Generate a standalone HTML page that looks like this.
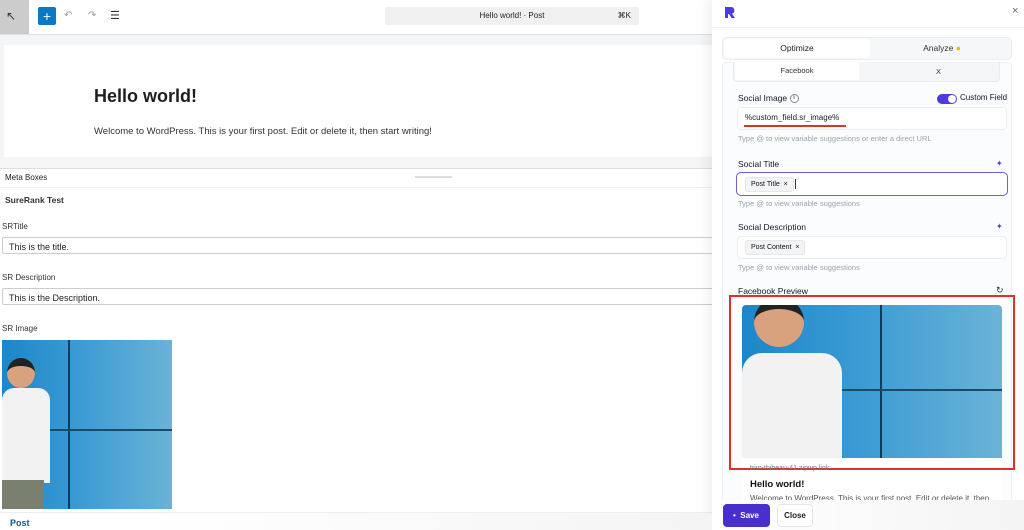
<!DOCTYPE html>
<html><head><style>
*{box-sizing:border-box;margin:0;padding:0}
body{width:1024px;height:530px;overflow:hidden;font-family:"Liberation Sans",sans-serif;background:#fff;position:relative;color:#1e1e1e}
.a{position:absolute}
.t{font-size:9px;color:#1e1e1e}
.inp{position:absolute;border:1px solid #ccc;border-radius:2px;background:#fff;font-size:9px;padding:4px 6px}
.img{background:linear-gradient(90deg,#1d86c8 0%,#3a9bd4 45%,#6ab3d6 100%);overflow:hidden}
.chip{display:inline-block;background:#f3f4f6;border:1px solid #e5e7eb;border-radius:3px;font-size:7px;padding:3px 5px;color:#111}
.lbl{font-size:8.5px;color:#111827;font-weight:500}
.hint{font-size:7.5px;color:#9ca3af}
</style></head><body>
<div class="a" style="left:0;top:0;width:29px;height:34px;background:#ccc;font-size:12px;padding:9px 6px;color:#333">↖</div>
<div class="a" style="left:38px;top:7px;width:18px;height:18px;background:#0a78c2;border-radius:2px;color:#fff;font-size:14px;text-align:center;line-height:18px">+</div>
<div class="a" style="left:64px;top:10px;font-size:10px;color:#999">↶</div>
<div class="a" style="left:88px;top:10px;font-size:10px;color:#999">↷</div>
<div class="a" style="left:110px;top:9px;font-size:11px;color:#333">☰</div>
<div class="a" style="left:385px;top:7px;width:254px;height:18px;background:#f0f0f0;border-radius:2px;font-size:8px;line-height:18px;text-align:center">Hello world! · Post<span style="position:absolute;right:8px">⌘K</span></div>
<div class="a" style="left:0;top:34px;width:712px;height:1px;background:#e0e0e0"></div>
<div class="a" style="left:0;top:35px;width:712px;height:133px;background:#f3f5f6"></div>
<div class="a" style="left:4px;top:45px;width:712px;height:112px;background:#fff"></div>
<div class="a" style="left:94px;top:86px;font-size:18px;font-weight:bold">Hello world!</div>
<div class="a" style="left:94px;top:126px;font-size:9.5px;color:#333">Welcome to WordPress. This is your first post. Edit or delete it, then start writing!</div>
<div class="a" style="left:0;top:168px;width:712px;height:1px;background:#ddd"></div>
<div class="a t" style="left:5px;top:173px;font-size:8px">Meta Boxes</div>
<div class="a" style="left:415px;top:176px;width:37px;height:2px;background:#ddd"></div>
<div class="a" style="left:0;top:187px;width:712px;height:1px;background:#eee"></div>
<div class="a t" style="left:5px;top:195px;font-size:8.5px;font-weight:bold;color:#333">SureRank Test</div>
<div class="a t" style="left:2px;top:222px;font-size:8px;color:#333">SRTitle</div>
<div class="inp" style="left:2px;top:237px;width:720px;height:17px">This is the title.</div>
<div class="a t" style="left:2px;top:273px;font-size:8px;color:#333">SR Description</div>
<div class="inp" style="left:2px;top:288px;width:720px;height:17px">This is the Description.</div>
<div class="a t" style="left:2px;top:324px;font-size:8px;color:#333">SR Image</div>
<div class="a img" style="left:2px;top:340px;width:170px;height:169px">
 <div class="a" style="left:66px;top:0;width:2px;height:169px;background:#0f3a5a"></div>
 <div class="a" style="left:0;top:89px;width:170px;height:2px;background:#1a4a6a"></div>
 <div class="a" style="left:5px;top:18px;width:28px;height:30px;border-radius:50%;background:#d9a27e;border-top:8px solid #222"></div>
 <div class="a" style="left:0;top:48px;width:48px;height:95px;background:#f2f2f2;border-radius:12px 12px 0 0"></div>
 <div class="a" style="left:0;top:140px;width:42px;height:29px;background:#7a8070"></div>
</div>
<div class="a" style="left:0;top:512px;width:712px;height:1px;background:#eee"></div>
<div class="a" style="left:712px;top:0;width:312px;height:530px;background:#fff;box-shadow:-6px 0 10px rgba(0,0,0,.06)"></div>
<svg class="a" style="left:724px;top:6px" width="12" height="13" viewBox="0 0 12 13"><path d="M1 1h6a3.5 3.5 0 0 1 1 6.8L11 12H7.5L5 8H4v4H1z" fill="#4b3ce0"/></svg>
<div class="a" style="left:1012px;top:5px;font-size:11px;color:#666">×</div>
<div class="a" style="left:712px;top:27px;width:312px;height:1px;background:#eee"></div>
<div class="a" style="left:722px;top:37px;width:290px;height:23px;background:#f5f7f9;border:1px solid #e9edf1;border-radius:5px"></div>
<div class="a" style="left:724px;top:39px;width:146px;height:19px;background:#fff;border-radius:4px;font-size:8.5px;text-align:center;line-height:19px">Optimize</div>
<div class="a" style="left:872px;top:39px;width:140px;height:19px;font-size:8.5px;text-align:center;line-height:19px;color:#333">Analyze <span style="color:#f5b800">●</span></div>
<div class="a" style="left:722px;top:62px;width:290px;height:450px;background:#fbfcfd;border:1px solid #eef0f3;border-radius:4px"></div>
<div class="a" style="left:733px;top:62px;width:267px;height:20px;background:#f3f5f7;border:1px solid #e8eaee;border-top:none;border-radius:0 0 4px 4px"></div>
<div class="a" style="left:735px;top:62px;width:124px;height:18px;background:#fff;font-size:7.5px;text-align:center;line-height:18px;color:#333">Facebook</div>
<div class="a" style="left:936px;top:67px;font-size:7.5px;color:#333">X</div>
<div class="a lbl" style="left:738px;top:93px">Social Image <span style="display:inline-block;width:9px;height:9px;border:1px solid #888;border-radius:50%;font-size:6px;text-align:center;line-height:7px;vertical-align:middle">i</span></div>
<div class="a" style="left:937px;top:94px;width:20px;height:10px;background:#4b3ce0;border-radius:5px"><div style="position:absolute;right:1px;top:1px;width:8px;height:8px;background:#fff;border-radius:50%"></div></div>
<div class="a lbl" style="left:960px;top:93px;font-size:8px">Custom Field</div>
<div class="a" style="left:737px;top:107px;width:270px;height:23px;background:#fff;border:1px solid #eceef1;border-radius:4px"></div>
<div class="a" style="left:745px;top:113px;font-size:8px;color:#222">%custom_field.sr_image%</div>
<div class="a" style="left:744px;top:125px;width:102px;height:2px;background:#e0302a"></div>
<div class="a hint" style="left:738px;top:134px">Type @ to view variable suggestions or enter a direct URL</div>
<div class="a lbl" style="left:738px;top:159px">Social Title</div>
<div class="a" style="left:996px;top:159px;font-size:8px;color:#4b3ce0">✦</div>
<div class="a" style="left:736px;top:172px;width:272px;height:24px;background:#fff;border:1.5px solid #6b5fd8;border-radius:5px"></div>
<div class="a chip" style="left:745px;top:177px">Post Title &nbsp;×</div>
<div class="a" style="left:795px;top:179px;width:1px;height:10px;background:#333"></div>
<div class="a hint" style="left:738px;top:199px">Type @ to view variable suggestions</div>
<div class="a lbl" style="left:738px;top:222px">Social Description</div>
<div class="a" style="left:996px;top:222px;font-size:8px;color:#4b3ce0">✦</div>
<div class="a" style="left:737px;top:236px;width:270px;height:23px;background:#fff;border:1px solid #eceef1;border-radius:4px"></div>
<div class="a chip" style="left:745px;top:240px">Post Content &nbsp;×</div>
<div class="a hint" style="left:738px;top:263px">Type @ to view variable suggestions</div>
<div class="a lbl" style="left:738px;top:286px">Facebook Preview</div>
<div class="a" style="left:996px;top:285px;font-size:9px;color:#333">↻</div>
<div class="a" style="left:742px;top:303px;width:260px;height:210px;background:#fff;border-radius:4px"></div>
<div class="a img" style="left:742px;top:305px;width:260px;height:153px;border-radius:4px 4px 0 0">
 <div class="a" style="left:138px;top:0;width:2px;height:153px;background:#0f3a5a"></div>
 <div class="a" style="left:0;top:84px;width:260px;height:2px;background:#1a4a6a"></div>
 <div class="a" style="left:12px;top:-8px;width:50px;height:50px;border-radius:50%;background:#d9a27e;border-top:12px solid #222"></div>
 <div class="a" style="left:0;top:48px;width:100px;height:110px;background:#f2f2f2;border-radius:20px 20px 0 0"></div>
</div>
<div class="a" style="left:729px;top:295px;width:286px;height:175px;border:2px solid #e0302a"></div>
<div class="a" style="left:750px;top:465px;font-size:7px;color:#777">trim-thibeau-41.zipwp.link</div>
<div class="a" style="left:750px;top:479px;font-size:9.5px;font-weight:bold;color:#111">Hello world!</div>
<div class="a" style="left:750px;top:494px;font-size:8px;color:#555;white-space:nowrap">Welcome to WordPress. This is your first post. Edit or delete it, then</div>
<div class="a" style="left:712px;top:500px;width:312px;height:30px;background:linear-gradient(90deg,#fff,#f4f4f4)"></div>
<div class="a" style="left:0;top:513px;width:712px;height:17px;background:linear-gradient(90deg,#fff 20%,#f4f4f4)"></div>
<div class="a" style="left:10px;top:518px;font-size:9px;color:#0a5a9c;font-weight:bold">Post</div>
<div class="a" style="left:723px;top:504px;width:47px;height:23px;background:#4a2fd0;border-radius:4px;color:#fff;font-size:8px;font-weight:bold;line-height:23px;padding-left:10px">• &nbsp;Save</div>
<div class="a" style="left:777px;top:504px;width:36px;height:23px;background:#fff;border:1px solid #e5e7eb;border-radius:4px;font-size:8px;font-weight:bold;line-height:21px;text-align:center">Close</div>
</body></html>
